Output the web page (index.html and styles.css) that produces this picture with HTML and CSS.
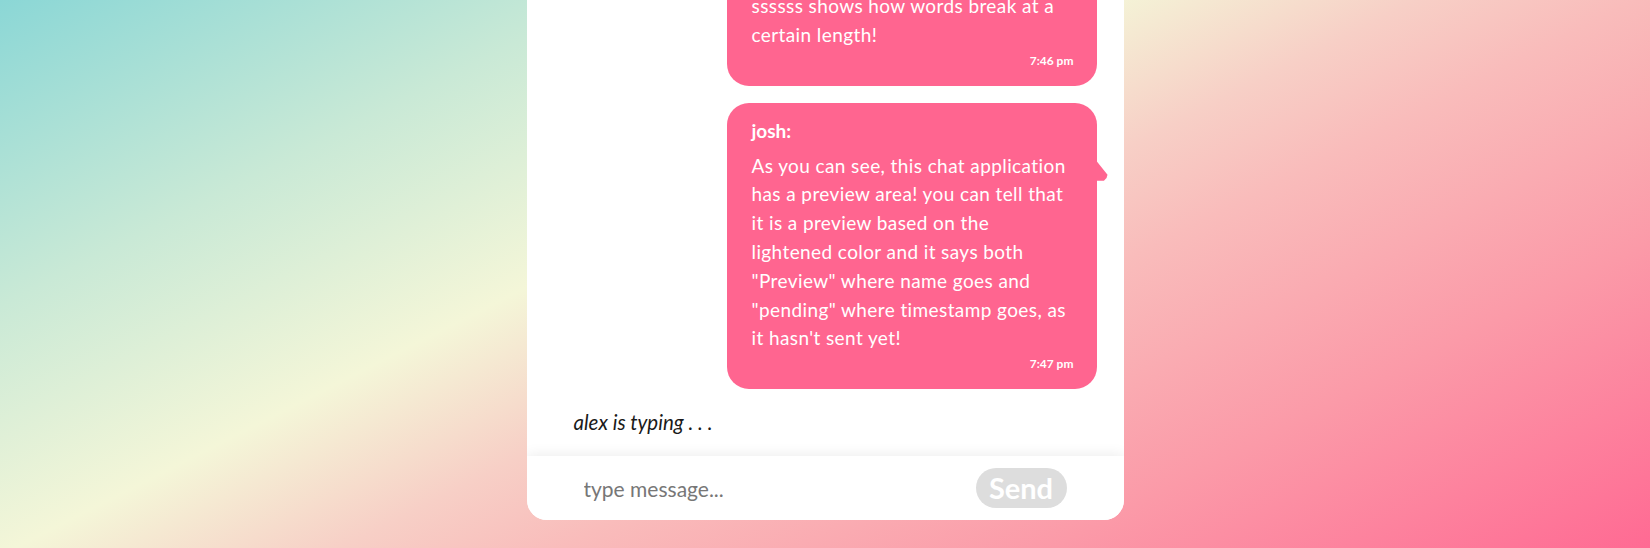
FILE: index.html
```html
<!DOCTYPE html>
<html lang="en">
<head>
<meta charset="utf-8">
<title>Chat</title>
<link rel="stylesheet" href="styles.css">
</head>
<body>
<div class="chat">
  <div class="messages">
    <div class="bubble">
      <div class="name">josh:</div>
      <div class="text">this one has a reallyyyyyyy long<br>ssssssssssssssssssssssssssssssssssssss<br>ssssss shows how words break at a<br>certain length!</div>
      <div class="time">7:46 pm</div>
    </div>
    <div class="bubble">
      <div class="name">josh:</div>
      <div class="text">As you can see, this chat application<br>has a preview area! you can tell that<br>it is a preview based on the<br>lightened color and it says both<br>"Preview" where name goes and<br>"pending" where timestamp goes, as<br>it hasn't sent yet!</div>
      <div class="time">7:47 pm</div>
    </div>
    <div class="typing">alex is typing . . .</div>
  </div>
  <form class="composer">
    <input class="field" type="text" placeholder="type message...">
    <button class="send" type="button">Send</button>
  </form>
</div>
</body>
</html>
```

FILE: styles.css
```css
html, body {
  margin: 0;
  height: 100%;
}

body {
  display: flex;
  justify-content: center;
  align-items: flex-end;
  overflow: hidden;
  font-family: "Lato", "Noto Sans", sans-serif;
  background: linear-gradient(153deg, #8bd7d6 0%, #c9e9d6 22%, #f4f6d8 40%, #f7cfc6 52%, #f9bcbb 60%, #fb9aa8 78%, #ff6a93 100%);
}

.chat {
  width: 597px;
  height: calc(100vh - 28px);
  margin-bottom: 28px;
  background: #fff;
  border-radius: 0 0 20px 20px;
  display: flex;
  flex-direction: column;
  overflow: hidden;
}

.messages {
  flex: 1;
  display: flex;
  flex-direction: column;
  justify-content: flex-end;
  overflow: hidden;
  padding: 0 27px 0 47px;
}

.bubble {
  position: relative;
  align-self: flex-end;
  flex-shrink: 0;
  box-sizing: border-box;
  width: 370px;
  padding: 13px 23px 17px 25px;
  margin-bottom: 17px;
  background: #ff6590;
  color: #fff;
  border-radius: 22px;
  overflow-wrap: anywhere;
}

.bubble::after {
  content: "";
  position: absolute;
  right: -11px;
  top: 57px;
  width: 12px;
  height: 21px;
  background: #ff6590;
  clip-path: polygon(0 0, 100% 72%, 92% 88%, 70% 100%, 0 100%);
}

.name {
  font-size: 19px;
  font-weight: 700;
  line-height: 29px;
  margin-bottom: 7px;
}

.text {
  font-size: 19px;
  letter-spacing: 0.4px;
  line-height: 28.8px;
  white-space: nowrap;
}

.time {
  text-align: right;
  font-size: 12px;
  font-weight: 700;
  line-height: 16px;
  margin-top: 3px;
}

.bubble + .bubble {
  margin-bottom: 19px;
}

.typing {
  flex-shrink: 0;
  font-style: italic;
  font-size: 20.5px;
  line-height: 28.8px;
  color: #1a1a1a;
  margin-bottom: 19px;
}

.composer {
  flex-shrink: 0;
  height: 64px;
  margin: 0;
  padding: 0 57px;
  display: flex;
  align-items: center;
  justify-content: space-between;
  background: #fff;
  box-shadow: 0 0 14px rgba(0, 0, 0, 0.09);
}

.field {
  border: none;
  outline: none;
  padding: 0;
  font-family: inherit;
  font-size: 21px;
  color: #333;
  background: transparent;
  width: 300px;
}

.field::placeholder {
  color: #777;
}

.send {
  width: 91px;
  height: 40px;
  border: none;
  border-radius: 20px;
  background: #dddddd;
  color: #fff;
  font-family: inherit;
  font-size: 29px;
  font-weight: 700;
  padding: 0;
  line-height: 40px;
}
```
